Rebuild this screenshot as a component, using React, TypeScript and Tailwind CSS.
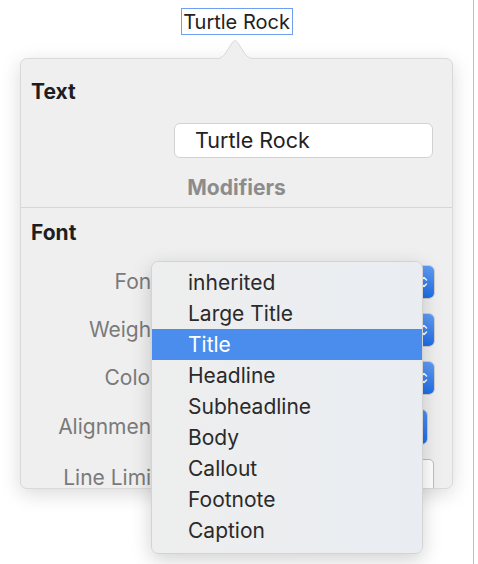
import React from "react";

const Chevrons = () => (
  <svg width="8" height="16" viewBox="0 0 8 16" fill="none" stroke="white" strokeWidth="1.6" strokeLinecap="round" strokeLinejoin="round">
    <path d="M1.5 6 L4 3.5 L6.5 6" />
    <path d="M1.5 10 L4 12.5 L6.5 10" />
  </svg>
);

const PopupButton = () => (
  <div className="flex h-[34px] w-[260px] items-stretch rounded-[6px] border border-[#cfcfcf] bg-white overflow-hidden">
    <div className="flex-1" />
    <div className="flex w-[20px] items-center justify-center bg-gradient-to-b from-[#5f9cf5] to-[#1d6ee8]">
      <Chevrons />
    </div>
  </div>
);

const Row = ({ label, children }: { label: string; children: React.ReactNode }) => (
  <div className="flex items-center">
    <div className="w-[137px] whitespace-nowrap text-right text-[21px] leading-[24px] text-[#7a7a7a]">{label}</div>
    <div className="ml-[17px]">{children}</div>
  </div>
);

const items = ["inherited", "Large Title", "Title", "Headline", "Subheadline", "Body", "Callout", "Footnote", "Caption"];

export default function App() {
  return (
    <div className="relative h-[564px] w-[478px] overflow-hidden bg-white" style={{ fontFamily: "Inter, 'Noto Sans', sans-serif" }}>
      <div className="flex h-full w-[474px] flex-col border-r border-[#bdbdbd]">
        <div className="flex justify-center pt-[8px]">
          <div className="flex h-[27px] w-[112px] items-center justify-center border-[1.5px] border-[#6f9ff2] text-[20px] leading-[24px] text-[#222]">
            Turtle Rock
          </div>
        </div>
        <div className="relative mx-[20px] mt-[23px] h-[431px] rounded-[7px] border border-[#d9d9d9] bg-[#efefef] shadow-[0_5px_20px_rgba(0,0,0,0.15)]">
          <svg className="absolute left-[186px] top-[-21px]" width="56" height="22" viewBox="0 0 56 22">
            <path d="M0 21.5 C10 21.5 14 21 18 16 L25 5 C27 2 29 2 31 5 L38 16 C42 21 46 21.5 56 21.5 Z" fill="#efefef" stroke="#d9d9d9" strokeWidth="1" />
            <rect x="0" y="21" width="56" height="2" fill="#efefef" />
          </svg>
          <div className="h-full overflow-hidden rounded-[7px]">
            <div className="px-[10px] pt-[20px] text-[21px] font-bold leading-[25px] text-[#1e1e1e]">Text</div>
            <div className="ml-[153px] mt-[19px] flex h-[35px] w-[259px] items-center rounded-[6px] border border-[#d2d2d2] bg-white pl-[20px] text-[21.5px] text-[#222]">
              Turtle Rock
            </div>
            <div className="mt-[17px] text-center text-[21px] font-bold leading-[25px] text-[#8c8c8c]">Modifiers</div>
            <div className="mt-[7px] h-px bg-[#d6d6d6]" />
            <div className="px-[10px] pt-[12px] text-[21px] font-bold leading-[25px] text-[#1e1e1e]">Font</div>
            <div className="mt-[20px] flex flex-col gap-[14px]">
              <Row label="Font"><PopupButton /></Row>
              <Row label="Weight"><PopupButton /></Row>
              <Row label="Color"><PopupButton /></Row>
              <Row label="Alignment">
                <div className="flex h-[36px] w-[253px] overflow-hidden rounded-[6px] border border-[#cfcfcf] bg-white">
                  <div className="flex-1" />
                  <div className="w-[60px] bg-gradient-to-b from-[#4f8ff3] to-[#1d6ee8]" />
                </div>
              </Row>
              <Row label="Line Limit">
                <div className="h-[38px] w-[259px] rounded-[5px] border border-[#bdbdbd] bg-white" />
              </Row>
            </div>
          </div>
        </div>
      </div>
      <div className="absolute left-[151px] top-[261px] h-[293px] w-[272px] rounded-[7px] border border-[#d3d3d3] bg-gradient-to-r from-[#eeeeee] to-[#e9edf2] py-[5px] shadow-[0_6px_20px_rgba(0,0,0,0.18)]">
        {items.map((it) => (
          <div
            key={it}
            className={
              it === "Title"
                ? "h-[31px] bg-[#4b8ded] pl-[36px] text-[21px] leading-[31px] text-white"
                : "h-[31px] pl-[36px] text-[21px] leading-[31px] text-[#2a2a2a]"
            }
          >
            {it}
          </div>
        ))}
      </div>
    </div>
  );
}
